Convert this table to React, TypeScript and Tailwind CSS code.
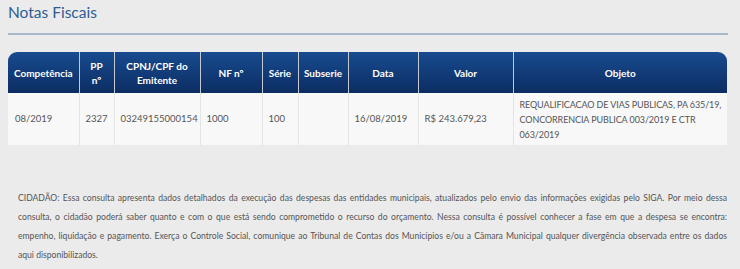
import React from 'react';

type Column = { label: React.ReactNode; width: number };

const columns: Column[] = [
  { label: 'Competência', width: 71 },
  { label: <>PP<br />nº</>, width: 35 },
  { label: <>CPNJ/CPF do<br />Emitente</>, width: 86 },
  { label: 'NF nº', width: 62 },
  { label: 'Série', width: 36 },
  { label: 'Subserie', width: 50 },
  { label: 'Data', width: 70 },
  { label: 'Valor', width: 95 },
  { label: 'Objeto', width: 214 },
];

const notas = [
  {
    competencia: '08/2019',
    pp: '2327',
    cnpj: '03249155000154',
    nf: '1000',
    serie: '100',
    subserie: '',
    data: '16/08/2019',
    valor: 'R$ 243.679,23',
    objeto: ['REQUALIFICACAO DE VIAS PUBLICAS, PA 635/19,', 'CONCORRENCIA PUBLICA 003/2019 E CTR', '063/2019'],
  },
];

const aviso = [
  'CIDADÃO: Essa consulta apresenta dados detalhados da execução das despesas das entidades municipais, atualizados pelo envio das informações exigidas pelo SIGA. Por meio dessa',
  'consulta, o cidadão poderá saber quanto e com o que está sendo comprometido o recurso do orçamento. Nessa consulta é possível conhecer a fase em que a despesa se encontra:',
  'empenho, liquidação e pagamento. Exerça o Controle Social, comunique ao Tribunal de Contas dos Municípios e/ou a Câmara Municipal qualquer divergência observada entre os dados',
];

export default function App() {
  return (
    <div className="min-h-[269px] w-[740px] bg-[#ebebeb] font-['Lato',sans-serif]">
      <div className="px-2">
        <h2 className="text-[15.5px] leading-[24px] text-[#2f5b94]">Notas Fiscais</h2>
        <div className="mt-[9px] h-[2px] w-[720px] bg-[#a9b7cb]" />

        <div className="mt-[17px] w-[719px] overflow-hidden rounded-t-[9px]">
          <table className="w-full table-fixed border-collapse text-[9.5px]">
            <colgroup>
              {columns.map((c, i) => (
                <col key={i} style={{ width: c.width }} />
              ))}
            </colgroup>
            <thead>
              <tr className="h-[41px] bg-gradient-to-b from-[#184b8f] to-[#0c2d63]">
                {columns.map((c, i) => (
                  <th
                    key={i}
                    className="border-l border-[#c3c9d3] px-1 text-center align-middle text-[10px] font-bold leading-[14px] text-white first:border-l-0"
                  >
                    {c.label}
                  </th>
                ))}
              </tr>
            </thead>
            <tbody>
              {notas.map((n) => (
                <tr key={n.nf} className="h-[52px] bg-[#f8f8f8] text-[#555]">
                  <td className="pl-[7px]">{n.competencia}</td>
                  <td className="border-l border-[#e4e4e4] pl-[6px]">{n.pp}</td>
                  <td className="border-l border-[#e4e4e4] pl-[6px]">{n.cnpj}</td>
                  <td className="border-l border-[#e4e4e4] pl-[6px]">{n.nf}</td>
                  <td className="border-l border-[#e4e4e4] pl-[6px]">{n.serie}</td>
                  <td className="border-l border-[#e4e4e4] pl-[6px]">{n.subserie}</td>
                  <td className="border-l border-[#e4e4e4] pl-[6px]">{n.data}</td>
                  <td className="border-l border-[#e4e4e4] pl-[6px]">{n.valor}</td>
                  <td className="whitespace-nowrap border-l border-[#e4e4e4] pl-[6px] text-[9px] leading-[15px] tracking-[-0.1px]">
                    {n.objeto.map((linha) => (
                      <div key={linha}>{linha}</div>
                    ))}
                  </td>
                </tr>
              ))}
            </tbody>
          </table>
        </div>
      </div>

      <div className="mt-[44px] w-[727px] pl-[18px] text-[8.6px] leading-[19px] text-[#555]">
        {aviso.map((linha, i) => (
          <p key={i} className="text-justify [text-align-last:justify]">
            {linha}
          </p>
        ))}
        <p>aqui disponibilizados.</p>
      </div>
    </div>
  );
}
